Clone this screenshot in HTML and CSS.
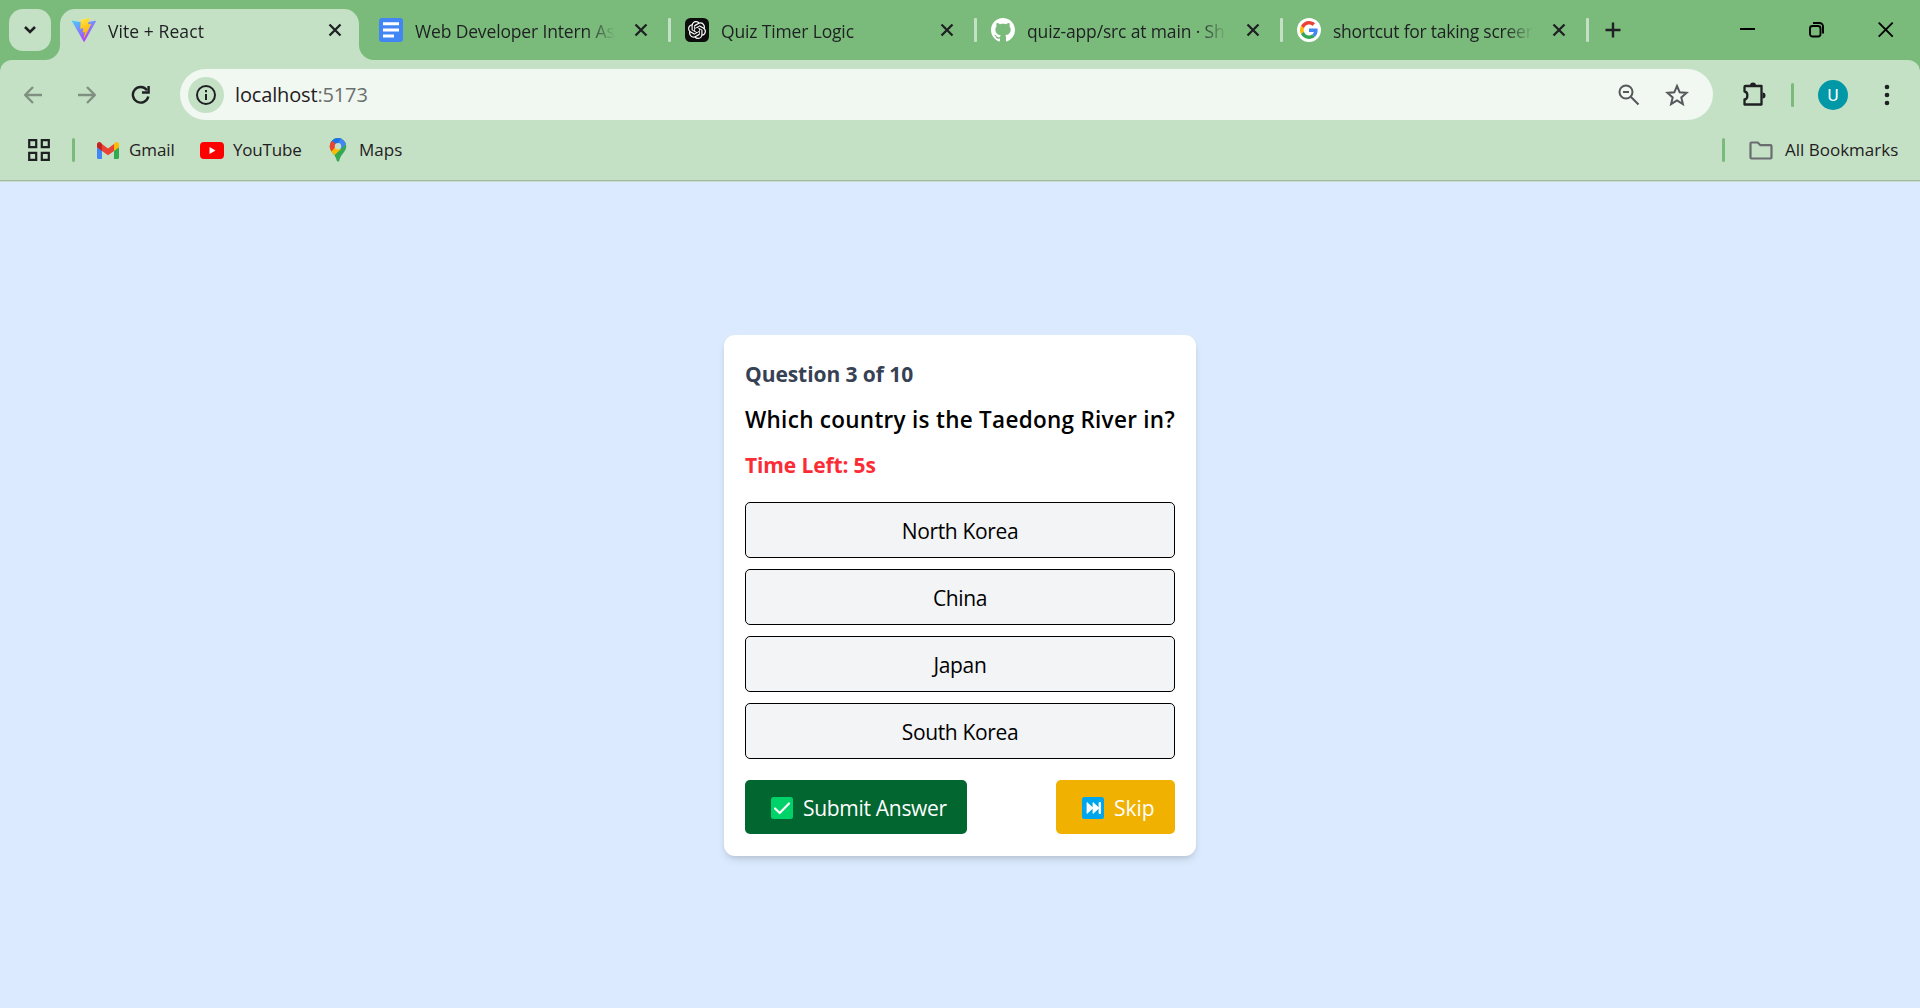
FILE: index.html
```html
<!DOCTYPE html>
<html lang="en">
<head>
<meta charset="utf-8">
<title>Vite + React</title>
<link rel="stylesheet" href="styles.css">
</head>
<body>
<div class="browser">
  <header class="tabstrip">
    <button class="tab-search" aria-label="Search tabs">
      <svg width="14" height="10" viewBox="0 0 14 10"><path d="M2 2l5 5 5-5" fill="none" stroke="#1f2023" stroke-width="2.6"/></svg>
    </button>
    <div class="tab active">
      <svg class="favicon" viewBox="0 0 24 24"><defs><linearGradient id="va" x1="0" y1="0" x2=".6" y2="1"><stop offset="0" stop-color="#41d1ff"/><stop offset="1" stop-color="#bd34fe"/></linearGradient><linearGradient id="vb" x1=".4" y1="0" x2=".6" y2="1"><stop offset="0" stop-color="#ffea83"/><stop offset=".1" stop-color="#ffdd35"/><stop offset="1" stop-color="#ffa800"/></linearGradient></defs><path fill="url(#va)" d="M23.9 3.6 12.6 23.6a.6.6 0 0 1-1 0L.1 3.6a.6.6 0 0 1 .6-.9L12 4.700l11.300-2a.6.6 0 0 1 .6.900z"/><path fill="url(#vb)" d="M17.300 0 9 1.600a.3.3 0 0 0-.2.300L8.200 10.500a.3.3 0 0 0 .4.300l2.300-.5a.3.3 0 0 1 .4.400l-.7 3.400a.3.3 0 0 0 .4.300l1.400-.4a.3.3 0 0 1 .4.400l-1.100 5.300c-.1.300.4.500.5.200l.1-.2 6.800-13.500a.3.3 0 0 0-.3-.4l-2.400.5a.3.3 0 0 1-.4-.4l1.600-5.400a.3.3 0 0 0-.3-.5z"/></svg>
      <span class="tab-title">Vite + React</span>
      <svg class="close" viewBox="0 0 14 14"><path d="M1.500 1.500l11 11M12.500 1.500l-11 11"/></svg>
    </div>
    <div class="tab">
      <svg class="favicon" viewBox="0 0 24 24"><rect width="24" height="24" rx="3" fill="#4285f4"/><path d="M4 5.800h16M4 12h16M4 18h11" stroke="#fff" stroke-width="3"/></svg>
      <span class="tab-title">Web Developer Intern As</span>
      <svg class="close" viewBox="0 0 14 14"><path d="M1.500 1.500l11 11M12.500 1.500l-11 11"/></svg>
      <i class="divider"></i>
    </div>
    <div class="tab">
      <svg class="favicon" viewBox="0 0 24 24"><rect width="24" height="24" rx="5.500" fill="#0d0d0d"/><path transform="translate(3 3) scale(.75)" fill="#fff" d="M22.2819 9.8211a5.9847 5.9847 0 0 0-.5157-4.9108 6.0462 6.0462 0 0 0-6.5098-2.9A6.0651 6.0651 0 0 0 4.9807 4.1818a5.9847 5.9847 0 0 0-3.9977 2.9 6.0462 6.0462 0 0 0 .7427 7.0966 5.98 5.98 0 0 0 .511 4.9107 6.051 6.051 0 0 0 6.5146 2.9001A5.9847 5.9847 0 0 0 13.2599 24a6.0557 6.0557 0 0 0 5.7718-4.2058 5.9894 5.9894 0 0 0 3.9977-2.9001 6.0557 6.0557 0 0 0-.7475-7.0729zm-9.022 12.6081a4.4755 4.4755 0 0 1-2.8764-1.0408l.1419-.0804 4.7783-2.7582a.7948.7948 0 0 0 .3927-.6813v-6.7369l2.02 1.1686a.071.071 0 0 1 .038.052v5.5826a4.504 4.504 0 0 1-4.4945 4.4944zm-9.6607-4.1254a4.4708 4.4708 0 0 1-.5346-3.0137l.142.0852 4.783 2.7582a.7712.7712 0 0 0 .7806 0l5.8428-3.3685v2.3324a.0804.0804 0 0 1-.0332.0615L9.74 19.9502a4.4992 4.4992 0 0 1-6.1408-1.6464zM2.3408 7.8956a4.485 4.485 0 0 1 2.3655-1.9728V11.6a.7664.7664 0 0 0 .3879.6765l5.8144 3.3543-2.0201 1.1685a.0757.0757 0 0 1-.071 0l-4.8303-2.7865A4.504 4.504 0 0 1 2.3408 7.872zm16.5963 3.8558L13.1038 8.364 15.1192 7.2a.0757.0757 0 0 1 .071 0l4.8303 2.7913a4.4944 4.4944 0 0 1-.6765 8.1042v-5.6772a.79.79 0 0 0-.407-.667zm2.0107-3.0231l-.142-.0852-4.7735-2.7818a.7759.7759 0 0 0-.7854 0L9.409 9.2297V6.8974a.0662.0662 0 0 1 .0284-.0615l4.8303-2.7866a4.4992 4.4992 0 0 1 6.6802 4.66zM8.3065 12.863l-2.02-1.1638a.0804.0804 0 0 1-.038-.0567V6.0742a4.4992 4.4992 0 0 1 7.3757-3.4537l-.142.0805L8.704 5.459a.7948.7948 0 0 0-.3927.6813zm1.0976-2.3654l2.602-1.4998 2.6069 1.4998v2.9994l-2.5974 1.4997-2.6067-1.4997Z"/></svg>
      <span class="tab-title">Quiz Timer Logic</span>
      <svg class="close" viewBox="0 0 14 14"><path d="M1.500 1.500l11 11M12.500 1.500l-11 11"/></svg>
      <i class="divider"></i>
    </div>
    <div class="tab">
      <svg class="favicon" viewBox="0 0 16 16"><path fill="#fff" d="M8 0C3.580 0 0 3.580 0 8c0 3.540 2.290 6.530 5.470 7.590.4.070.55-.17.55-.38 0-.19-.01-.82-.01-1.490-2.010.37-2.530-.49-2.690-.94-.09-.23-.48-.94-.82-1.130-.28-.15-.68-.52-.01-.53.63-.01 1.080.58 1.230.82.72 1.210 1.870.87 2.330.66.070-.52.28-.87.51-1.070-1.780-.2-3.640-.89-3.640-3.950 0-.87.31-1.590.82-2.150-.08-.2-.36-1.020.08-2.120 0 0 .67-.21 2.200.82.64-.18 1.320-.27 2-.27s1.360.09 2 .27c1.530-1.040 2.200-.82 2.200-.82.44 1.100.16 1.920.08 2.120.51.56.82 1.270.82 2.150 0 3.070-1.870 3.750-3.650 3.950.29.25.54.73.54 1.480 0 1.070-.01 1.930-.01 2.200 0 .21.15.46.55.38A8.010 8.010 0 0 0 16 8c0-4.420-3.580-8-8-8z"/></svg>
      <span class="tab-title">quiz-app/src at main · Sh</span>
      <svg class="close" viewBox="0 0 14 14"><path d="M1.500 1.500l11 11M12.500 1.500l-11 11"/></svg>
      <i class="divider"></i>
    </div>
    <div class="tab">
      <svg class="favicon" viewBox="0 0 24 24"><circle cx="12" cy="12" r="12" fill="#fff"/><g transform="translate(3 3) scale(.375)"><path fill="#ea4335" d="M24 9.500c3.540 0 6.710 1.220 9.210 3.600l6.850-6.850C35.900 2.380 30.470 0 24 0 14.620 0 6.510 5.380 2.560 13.220l7.980 6.190C12.430 13.720 17.740 9.500 24 9.500z"/><path fill="#4285f4" d="M46.980 24.550c0-1.570-.15-3.090-.38-4.550H24v9.020h12.940c-.58 2.960-2.260 5.480-4.780 7.180l7.730 6c4.510-4.180 7.090-10.360 7.090-17.650z"/><path fill="#fbbc05" d="M10.530 28.590c-.48-1.450-.76-2.990-.76-4.590s.27-3.140.76-4.590l-7.980-6.190C.92 16.460 0 20.120 0 24c0 3.880.92 7.540 2.560 10.780l7.970-6.190z"/><path fill="#34a853" d="M24 48c6.480 0 11.930-2.130 15.890-5.810l-7.730-6c-2.150 1.450-4.920 2.300-8.160 2.300-6.260 0-11.570-4.220-13.470-9.910l-7.980 6.190C6.510 42.620 14.620 48 24 48z"/></g></svg>
      <span class="tab-title long">shortcut for taking screen</span>
      <svg class="close" viewBox="0 0 14 14"><path d="M1.500 1.500l11 11M12.500 1.500l-11 11"/></svg>
      <i class="divider"></i>
    </div>
    <svg class="new-tab" viewBox="0 0 16 16"><path d="M8 .5v15M.5 8h15" stroke="#1f2023" stroke-width="2.400"/></svg>
    <div class="window-controls">
      <svg width="16" height="16" viewBox="0 0 16 16"><path d="M0 7h15" stroke="#000" stroke-width="2"/></svg>
      <svg width="16" height="16" viewBox="0 0 16 16" fill="none" stroke="#000" stroke-width="1.900"><rect x="1" y="4" width="10.500" height="10.500" rx="2.500"/><path d="M4 1h6.500a3.500 3.500 0 0 1 3.500 3.500V11.500"/></svg>
      <svg width="16" height="16" viewBox="0 0 16 16"><path d="M.7.7l14 14M14.700.7.7 14.700" stroke="#000" stroke-width="1.900"/></svg>
    </div>
  </header>

  <div class="chrome">
    <div class="toolbar">
      <nav class="nav">
        <svg class="dim" width="18" height="18" viewBox="0 0 18 18"><path d="M18 9H1.500M9 1 1.200 9 9 17"/></svg>
        <svg class="dim" width="18" height="18" viewBox="0 0 18 18"><path d="M0 9h16.500M9 1l7.800 8L9 17"/></svg>
        <svg class="reload" width="20" height="20" viewBox="0 0 20 20"><path d="M17.300 11.500A7.800 7.800 0 1 1 16 5.200" fill="none" stroke="#1f2023" stroke-width="2.400"/><path d="M11 7.500h6.600V1" fill="none" stroke="#1f2023" stroke-width="2.400"/></svg>
      </nav>
      <div class="omnibox">
        <span class="site-info"><svg width="20" height="20" viewBox="0 0 20 20"><circle cx="10" cy="10" r="9" fill="none" stroke="#1f2023" stroke-width="2"/><path d="M10 9v6M10 5v2.200" stroke="#1f2023" stroke-width="2"/></svg></span>
        <span class="url">localhost<span class="port">:5173</span></span>
        <svg class="zoom" width="22" height="22" viewBox="0 0 22 22" fill="none" stroke="#55585a" stroke-width="2"><circle cx="8" cy="8" r="6.500"/><path d="M12.800 12.800l7.700 7.700M5 8h6"/></svg>
        <svg class="star" width="24" height="24" viewBox="0 0 24 24" fill="none" stroke="#55585a" stroke-width="2"><path d="M12 3l2.700 6.300 6.800.6-5.200 4.500 1.600 6.700L12 17.500l-5.900 3.600 1.600-6.700L2.500 9.900l6.800-.6z"/></svg>
      </div>
      <svg class="puzzle" width="26" height="26" viewBox="0 0 26 26"><path d="M4.500 5h16v18.500h-17V18.500c3.800-.5 3.800-7.500 0-8V6a1 1 0 0 1 1-1z" fill="none" stroke="#1f2023" stroke-width="2.300" stroke-linejoin="round"/><path d="M9 4.500a3 3 0 0 1 6 0zM21.500 11.500a3 3 0 0 1 0 6z" fill="#1f2023"/></svg>
      <i class="rule"></i>
      <span class="avatar">U</span>
      <svg class="menu" width="6" height="22" viewBox="0 0 6 22"><circle cx="3" cy="3" r="2.300"/><circle cx="3" cy="11" r="2.300"/><circle cx="3" cy="19" r="2.300"/></svg>
    </div>
    <div class="bookmarks">
      <svg class="apps" width="22" height="22" viewBox="0 0 22 22" fill="none" stroke="#1f2023" stroke-width="2.200"><path d="M1.200 1.200h7v7h-7zM13.800 1.200h7v7h-7zM1.200 13.800h7v7h-7zM13.800 13.800h7v7h-7z"/></svg>
      <i class="rule"></i>
      <span class="bookmark gmail"><svg width="22" height="17" viewBox="0 0 22 17"><path fill="#4285f4" d="M0 5v10.500A1.500 1.500 0 0 0 1.500 17H5V8z"/><path fill="#34a853" d="M22 5v10.500a1.500 1.500 0 0 1-1.500 1.500H17V8z"/><path fill="#fbbc04" d="M17 2v7l5-3.700V2.500C22 .2 19.600-.7 18 .7z"/><path fill="#ea4335" d="M5 2l6 4.500L17 2v7l-6 4.300L5 9z"/><path fill="#c5221f" d="M5 2v7L0 5.300V2.500C0 .2 2.400-.7 4 .7z"/></svg><span class="label">Gmail</span></span>
      <span class="bookmark youtube"><svg width="24" height="17" viewBox="0 0 24 17"><rect width="24" height="17" rx="4" fill="#f00"/><path d="M9.500 5v7l6-3.500z" fill="#fff"/></svg><span class="label">YouTube</span></span>
      <span class="bookmark maps"><svg width="18" height="24" viewBox="0 0 18 24"><defs><clipPath id="pin"><path d="M9 0a8.300 8.300 0 0 1 8.300 8.300c0 3-1.600 5-3.700 7.700-1.700 2.200-2.800 4-3.300 6.500-.3 1.600-2.200 1.600-2.600 0-.5-2.500-1.600-4.300-3.300-6.500C2.300 13.300.7 11.300.7 8.300A8.300 8.300 0 0 1 9 0z"/></clipPath></defs><g clip-path="url(#pin)"><path fill="#34a853" d="M0 0h18v24H0z"/><path fill="#fbbc04" d="M0 5h9v4l3 2L3.500 19 0 14z"/><path fill="#4285f4" d="M10 0h8v5l-6 6-4-4z"/><path fill="#1a73e8" d="M2 0h10l-3 5-3 4-5-4z"/><path fill="#ea4335" d="M0 4l2.200-2L8 7l-5.500 6.500L0 10z"/></g><circle cx="9" cy="8.300" r="3.200" fill="#c5e1c5"/></svg><span class="label">Maps</span></span>
      <span class="all"><i class="rule"></i><svg width="24" height="19" viewBox="0 0 24 19"><path d="M2.500 1.500h6.300l2.500 2.700h10.200a1 1 0 0 1 1 1v11.300a1 1 0 0 1-1 1h-19a1 1 0 0 1-1-1v-14a1 1 0 0 1 1-1z" fill="none" stroke="#6a6d70" stroke-width="2.200"/></svg><span class="label">All Bookmarks</span></span>
    </div>
  </div>

  <main class="page">
    <section class="card">
      <p class="progress">Question 3 of 10</p>
      <h1 class="question">Which country is the Taedong River in?</h1>
      <p class="timer">Time Left: 5s</p>
      <div class="options">
        <button class="option">North Korea</button>
        <button class="option">China</button>
        <button class="option">Japan</button>
        <button class="option">South Korea</button>
      </div>
      <div class="actions">
        <button class="submit"><svg width="22" height="22" viewBox="0 0 22 22"><rect width="22" height="22" rx="2.500" fill="#00d26a"/><path d="M4 11.500l4.700 4.500L18 6.500" fill="none" stroke="#fff" stroke-width="2.200" stroke-linecap="round" stroke-linejoin="round"/></svg><span class="label">Submit Answer</span></button>
        <button class="skip"><svg width="22" height="22" viewBox="0 0 22 22"><rect width="22" height="22" rx="2.500" fill="#00a6ed"/><path d="M5 5.500l6 5.500V5.500l6 5.500V5.500h1.500v11H17V11l-6 5.500V11l-6 5.500z" fill="#fff" stroke="#fff" stroke-width=".8" stroke-linejoin="round"/></svg><span class="label">Skip</span></button>
      </div>
    </section>
  </main>
</div>
</body>
</html>
```
FILE: styles.css
```css
* { box-sizing: border-box; }
body { margin: 0; font-family: "Open Sans", "Noto Sans", sans-serif; color: #1f2023; }
button { border: 0; padding: 0; margin: 0; font: inherit; color: inherit; letter-spacing: inherit; }
svg { display: block; flex: none; }
p, h1 { margin: 0; }

.browser { width: 1920px; height: 1008px; display: flex; flex-direction: column; overflow: hidden; background: #7abb7b; }

/* Tab strip */
.tabstrip { height: 60px; flex: none; display: flex; align-items: flex-start; padding-left: 9px; }
.tab-search { width: 42px; height: 42px; margin: 9px 9px 0 0; border-radius: 14px; background: #c5e1c5; display: grid; place-items: center; }
.tab { position: relative; width: 306px; height: 42px; margin-top: 9px; padding-left: 13px; display: flex; align-items: center; font-size: 17.5px; letter-spacing: -.15px; }
.tab.active { height: 51px; padding-left: 12px; padding-bottom: 9px; letter-spacing: .08px; }
.tab.active::before { content: ""; position: absolute; inset: 0 7px 0 0; background: #c5e1c5; border-radius: 15px 15px 0 0; }
.tab.active::after { content: ""; position: absolute; left: -15px; right: -8px; bottom: 0; height: 15px; background: radial-gradient(circle at 0 0, transparent 14.5px, #c5e1c5 15.5px) left / 15px 15px no-repeat, radial-gradient(circle at 100% 0, transparent 14.5px, #c5e1c5 15.5px) right / 15px 15px no-repeat; }
.tab > * { position: relative; }
.favicon { width: 24px; height: 24px; }
.tab-title { width: 201px; margin-left: 12px; overflow: hidden; white-space: nowrap; line-height: 30px; padding-top: 2px; -webkit-mask-image: linear-gradient(90deg, #000 172px, transparent 200px); mask-image: linear-gradient(90deg, #000 172px, transparent 200px); }
.tab-title.long { letter-spacing: -.25px; }
.close { width: 14px; height: 14px; margin: 0 -.5px 0 17.5px; }
.active .close { margin-left: 18.5px; }
.close path { fill: none; stroke: #1f2023; stroke-width: 2.3; }
.divider { width: 3px; height: 24px; margin-left: 21px; background: #c5e1c5; border-radius: 1px; }
.new-tab { width: 16px; height: 16px; margin: 22px 0 0 15px; }
.window-controls { display: flex; gap: 53px; margin: 22px 26px 0 auto; }

/* Toolbar and bookmarks */
.chrome { height: 122px; flex: none; background: #c5e1c5; border-bottom: 1px solid #c9ddd3; box-shadow: inset 0 -1px #9fb99f; border-radius: 12px 12px 0 0; }
.toolbar { padding-top: 9px; display: flex; align-items: center; height: 60px; }
.nav { display: flex; align-items: center; gap: 36px; width: 180px; padding-left: 24px; }
.nav .dim path { fill: none; stroke: #7f9080; stroke-width: 2.3; }
.reload { margin-left: -1px; }
.omnibox { width: 1533px; height: 51px; border-radius: 26px; background: #f1f7f1; display: flex; align-items: center; padding-left: 8px; }
.site-info { width: 36px; height: 36px; border-radius: 50%; background: #c5e1c5; display: grid; place-items: center; }
.url { margin-left: 11px; font-size: 20px; line-height: 30px; letter-spacing: -.15px; }
.port { color: #6a6f6b; }
.zoom { margin-left: auto; }
.star { margin: 0 24px 0 25px; }
.puzzle { margin: -2px 0 0 28px; }
.rule { width: 3px; height: 24px; border-radius: 1.5px; background: #7abb7b; }
.toolbar .rule { margin-left: 24px; }
.avatar { width: 30px; height: 30px; margin-left: 24px; border-radius: 50%; background: #0097a7; color: #fff; display: grid; place-items: center; font: 17px Roboto, sans-serif; }
.menu { margin-left: 36px; fill: #1f2023; }

.bookmarks { height: 60px; display: flex; align-items: center; padding-left: 28px; font-size: 17px; }
.bookmarks .label { padding-bottom: 2px; }
.bookmarks > .rule { margin-left: 22px; }
.bookmark { display: flex; align-items: center; }
.gmail { width: 103px; margin-left: 22px; gap: 10px; letter-spacing: -.1px; }
.youtube { width: 129px; gap: 9px; letter-spacing: -.2px; }
.maps { gap: 12px; }
.all { display: flex; align-items: center; margin-left: auto; width: 198px; }
.all svg { margin: 0 12px 0 24px; }

/* Quiz */
.page { flex: 1; background: #dbeafe; display: flex; align-items: flex-start; justify-content: center; padding-top: 153px; }
.card { width: 472px; height: 521px; padding: 21px; border-radius: 11px; background: #fff; color: #000; box-shadow: 0 5px 8px -1px rgba(0,0,0,.1), 0 3px 5px -2px rgba(0,0,0,.1); white-space: nowrap; }
.progress { color: #364153; font-size: 21px; font-weight: 700; line-height: 36px; letter-spacing: -.07px; }
.question { margin-top: 10px; font-size: 22.5px; font-weight: 600; line-height: 36px; letter-spacing: .28px; }
.timer { margin-top: 9px; color: #fb2c36; font-size: 21px; font-weight: 700; line-height: 36px; letter-spacing: -.13px; }
.options { margin-top: 19px; display: grid; gap: 11px; }
.option { height: 56px; padding-top: 2px; border: 1px solid #000; border-radius: 5px; background: #f3f4f6; font-size: 21px; letter-spacing: -.35px; }
.actions { margin-top: 21px; display: flex; justify-content: space-between; color: #fff; font-size: 21px; letter-spacing: -.3px; }
.actions button { height: 54px; display: flex; align-items: center; border-radius: 5px; gap: 10px; padding: 2px 0 0 26px; }
.submit { width: 222px; background: #016630; }
.skip { width: 119px; background: #f0b100; letter-spacing: -.05px; }
```
